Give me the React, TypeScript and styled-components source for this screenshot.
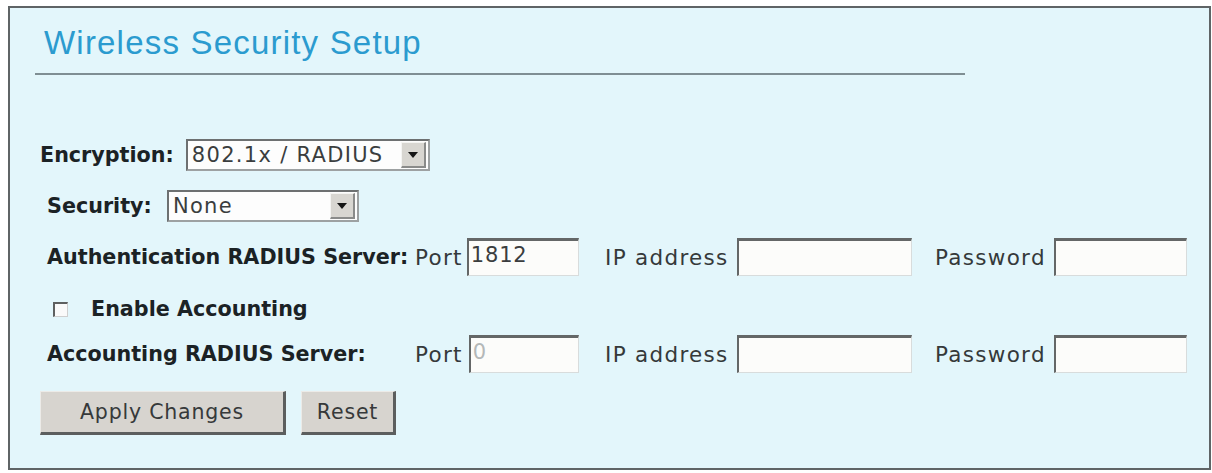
import styled, { createGlobalStyle } from "styled-components";

const GlobalStyle = createGlobalStyle`
    body {
        margin: 0;
        background: #ffffff;
        font-family: "DejaVu Sans", "Liberation Sans", sans-serif;
    }
`;

const Panel = styled.div`
    box-sizing: border-box;
    margin: 6px 0 0 8px;
    width: 1203px;
    height: 464px;
    border: 2px solid #5f6466;
    background: #e3f6fb;
    padding: 16px 0 0 0;
`;

const Title = styled.h1`
    margin: 0 0 0 34px;
    font-family: "Liberation Sans", Arial, sans-serif;
    font-weight: normal;
    font-size: 33px;
    line-height: 38px;
    letter-spacing: 1.2px;
    color: #2b9bcf;
`;

const Rule = styled.div`
    margin: 11px 0 0 25px;
    width: 930px;
    height: 2px;
    background: #7f8e93;
`;

const Row = styled.div<{ $indent: number; $top: number; $height: number }>`
    display: flex;
    align-items: center;
    margin: ${(p) => p.$top}px 0 0 ${(p) => p.$indent}px;
    height: ${(p) => p.$height}px;
`;

const Label = styled.span<{ $gap?: number }>`
    font-weight: bold;
    font-size: 20.7px;
    color: #1b2225;
    margin-right: ${(p) => p.$gap ?? 0}px;
    white-space: nowrap;
`;

const ServerRow = styled.div<{ $top: number }>`
    display: grid;
    grid-template-columns: 368px 190px 330px auto;
    align-items: center;
    margin: ${(p) => p.$top}px 0 0 37px;
    height: 38px;
`;

const Field = styled.div`
    display: flex;
    align-items: center;
`;

const FieldText = styled.span<{ $gap: number }>`
    font-size: 21.5px;
    letter-spacing: 1.3px;
    color: #35393a;
    margin-right: ${(p) => p.$gap}px;
`;

const TextBox = styled.div<{ $width: number; $muted?: boolean }>`
    box-sizing: border-box;
    width: ${(p) => p.$width}px;
    height: 38px;
    background: #fcfcfa;
    border-top: 3px solid #646767;
    border-left: 2px solid #646767;
    border-right: 1px solid #d8dcdc;
    border-bottom: 1px solid #d8dcdc;
    padding: 1px 0 0 2px;
    font-size: 21px;
    letter-spacing: 0.8px;
    line-height: 26px;
    color: ${(p) => (p.$muted ? "#b4b8b8" : "#3a3d3e")};
`;

const SelectBox = styled.div<{ $width: number }>`
    box-sizing: border-box;
    display: flex;
    align-items: center;
    justify-content: space-between;
    width: ${(p) => p.$width}px;
    height: 32px;
    background: #fdfdfd;
    border: 2px solid #6d7071;
    border-bottom-color: #9da1a2;
    border-right-color: #9da1a2;
    padding: 0 2px 0 4px;
`;

const SelectValue = styled.span`
    font-size: 21px;
    letter-spacing: 1.3px;
    color: #3a3d3e;
    white-space: nowrap;
`;

const ArrowButton = styled.span`
    box-sizing: border-box;
    display: flex;
    align-items: center;
    justify-content: center;
    width: 25px;
    height: 26px;
    background: #d8d6d1;
    border-top: 1px solid #f4f4f2;
    border-left: 1px solid #f4f4f2;
    border-right: 2px solid #8a8b8a;
    border-bottom: 2px solid #8a8b8a;
`;

const Arrow = styled.span`
    width: 0;
    height: 0;
    border-left: 5px solid transparent;
    border-right: 5px solid transparent;
    border-top: 6px solid #151515;
`;

const CheckBox = styled.span`
    box-sizing: border-box;
    width: 15px;
    height: 15px;
    background: #fafafa;
    border-top: 2px solid #5e6060;
    border-left: 2px solid #5e6060;
    border-right: 1px solid #cfcfcf;
    border-bottom: 1px solid #cfcfcf;
    margin-right: 23px;
`;

const ButtonBar = styled.div`
    display: flex;
    gap: 15px;
    margin: 18px 0 0 30px;
`;

const Button = styled.button<{ $width: number }>`
    box-sizing: border-box;
    width: ${(p) => p.$width}px;
    height: 44px;
    background: #d7d4cf;
    border: none;
    border-top: 1px solid #ecebe8;
    border-left: 1px solid #ecebe8;
    border-right: 3px solid #5c5e5e;
    border-bottom: 3px solid #5c5e5e;
    font-family: "DejaVu Sans", "Liberation Sans", sans-serif;
    font-size: 20.5px;
    letter-spacing: 0.8px;
    color: #36393a;
    padding: 0;
`;

function Select({ value, width }: { value: string; width: number }) {
    return (
        <SelectBox $width={width}>
            <SelectValue>{value}</SelectValue>
            <ArrowButton>
                <Arrow />
            </ArrowButton>
        </SelectBox>
    );
}

function ServerLine({ label, port, muted, top }: { label: string; port: string; muted?: boolean; top: number }) {
    return (
        <ServerRow $top={top}>
            <Label>{label}</Label>
            <Field>
                <FieldText $gap={muted ? 6 : 4}>Port</FieldText>
                <TextBox $width={muted ? 110 : 112} $muted={muted}>
                    {port}
                </TextBox>
            </Field>
            <Field>
                <FieldText $gap={8}>IP address</FieldText>
                <TextBox $width={175} />
            </Field>
            <Field>
                <FieldText $gap={8}>Password</FieldText>
                <TextBox $width={133} />
            </Field>
        </ServerRow>
    );
}

function App() {
    return (
        <>
            <GlobalStyle />
            <Panel>
                <Title>Wireless Security Setup</Title>
                <Rule />

                <Row $indent={30} $top={64} $height={32}>
                    <Label $gap={12}>Encryption:</Label>
                    <Select value="802.1x / RADIUS" width={244} />
                </Row>

                <Row $indent={37} $top={19} $height={32}>
                    <Label $gap={15}>Security:</Label>
                    <Select value="None" width={192} />
                </Row>

                <ServerLine label="Authentication RADIUS Server:" port="1812" top={16} />

                <Row $indent={43} $top={23} $height={20}>
                    <CheckBox />
                    <Label>Enable Accounting</Label>
                </Row>

                <ServerLine label="Accounting RADIUS Server:" port="0" muted top={16} />

                <ButtonBar>
                    <Button $width={246}>Apply Changes</Button>
                    <Button $width={95}>Reset</Button>
                </ButtonBar>
            </Panel>
        </>
    );
}

export default App;
